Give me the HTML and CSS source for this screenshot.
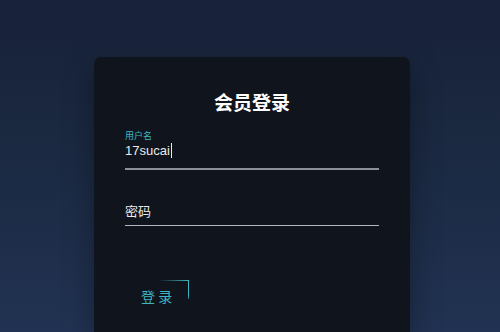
FILE: index.html
```html
<!DOCTYPE html>
<html>
<head>
<meta charset="utf-8">
<link rel="stylesheet" href="styles.css">
</head>
<body>
<div class="card">
  <h2 class="title">会员登录</h2>
  <div class="field field-user">
    <label class="label">用户名</label>
    <div class="value">17sucai<span class="caret"></span></div>
  </div>
  <div class="field field-pw">
    <div class="value">密码</div>
  </div>
  <div class="btn">
    <span class="corner-top"></span>
    <span class="corner-right"></span>
    登 录
  </div>
</div>
</body>
</html>
```
FILE: styles.css
```css
html, body {
  margin: 0;
  height: 100%;
}
body {
  background: linear-gradient(180deg, #18223a 0%, #1a2840 40%, #213252 100%);
  font-family: "Noto Sans CJK SC", "Noto Sans", sans-serif;
  overflow: hidden;
}
.card {
  margin: 57px 0 0 94px;
  width: 316px;
  height: 275px;
  box-sizing: border-box;
  padding: 27px 31px 0 31px;
  background: #10151d;
  border-radius: 7px 7px 0 0;
  box-shadow: 0 10px 30px rgba(0, 0, 0, 0.35);
}
.title {
  margin: 0;
  text-align: center;
  color: #ffffff;
  font-size: 19px;
  font-weight: 700;
  line-height: 36px;
}
.field-user {
  margin-top: 10px;
  border-bottom: 2px solid #8c9096;
  padding-bottom: 8px;
}
.label {
  display: block;
  color: #3fb6c4;
  font-size: 9px;
  line-height: 12px;
}
.value {
  color: #e8eaec;
  font-size: 13px;
  line-height: 18px;
  font-family: "Liberation Sans", "Noto Sans CJK SC", sans-serif;
}
.caret {
  display: inline-block;
  width: 1px;
  height: 15px;
  background: #e8eaec;
  vertical-align: -3px;
  margin-left: 1px;
}
.field-pw {
  margin-top: 32px;
  border-bottom: 1px solid #b4b7bc;
  padding-bottom: 5px;
}
.field-pw .value {
  font-family: "Noto Sans CJK SC", sans-serif;
}
.btn {
  position: relative;
  margin: 60px 0 0 0;
  width: 64px;
  height: 20px;
  color: #3fb6c4;
  font-size: 14px;
  line-height: 20px;
  padding-left: 16px;
  box-sizing: border-box;
}
.corner-top {
  position: absolute;
  right: 0;
  top: -6px;
  width: 30px;
  height: 1px;
  background: linear-gradient(90deg, rgba(63,182,196,0), #3fb6c4);
}
.corner-right {
  position: absolute;
  right: 0;
  top: -6px;
  width: 1px;
  height: 19px;
  background: linear-gradient(180deg, #3fb6c4, #3fb6c4 80%, rgba(63,182,196,0.6));
}
```
